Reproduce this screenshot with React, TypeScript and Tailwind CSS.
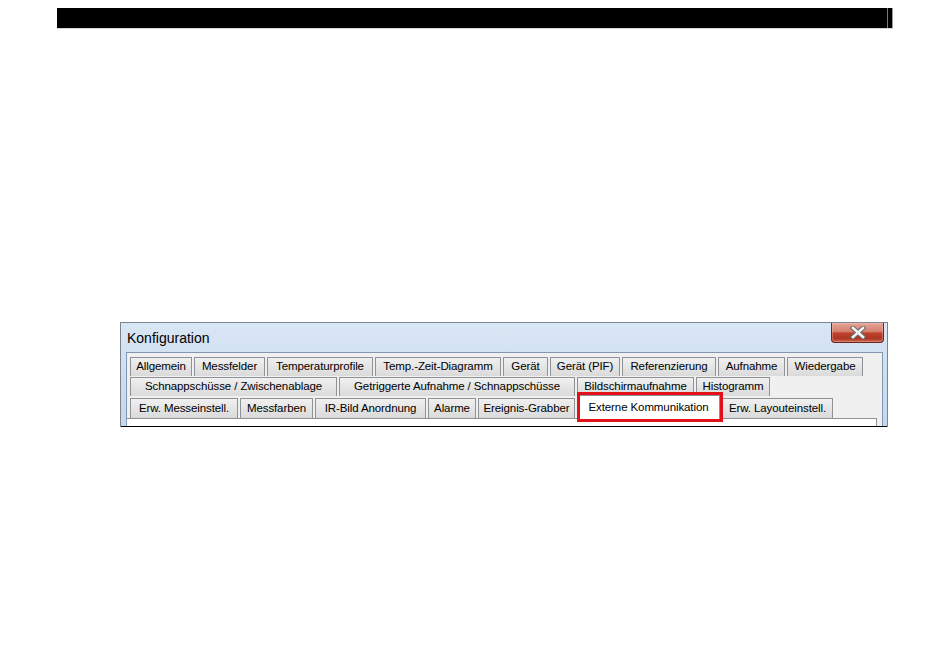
import React from "react";

type T = [string, string];

const row1: T[] = [
  ["Allgemein", "w-[62px]"],
  ["Messfelder", "w-[71px]"],
  ["Temperaturprofile", "w-[106px]"],
  ["Temp.-Zeit-Diagramm", "w-[126px]"],
  ["Gerät", "w-[45px]"],
  ["Gerät (PIF)", "w-[70px]"],
  ["Referenzierung", "w-[94px]"],
  ["Aufnahme", "w-[67px]"],
  ["Wiedergabe", "w-[76px]"],
];

const row2: T[] = [
  ["Schnappschüsse / Zwischenablage", "w-[207px]"],
  ["Getriggerte Aufnahme / Schnappschüsse", "w-[236px]"],
  ["Bildschirmaufnahme", "w-[117px]"],
  ["Histogramm", "w-[74px]"],
];

const row3a: T[] = [
  ["Erw. Messeinstell.", "w-[108px]"],
  ["Messfarben", "w-[73px]"],
  ["IR-Bild Anordnung", "w-[111px]"],
  ["Alarme", "w-[48px]"],
  ["Ereignis-Grabber", "w-[97px]"],
];

const tabCls =
  "h-full flex items-center justify-center border border-b-0 border-[#8e9196] bg-[linear-gradient(to_bottom,#f0f0f0,#dadada)] text-[11.5px] tracking-[-0.1px] leading-none text-black whitespace-nowrap";

function Tab({ label, w }: { label: string; w: string }) {
  return <div className={`${tabCls} ${w}`}>{label}</div>;
}

function CloseX() {
  return (
    <svg width="18" height="13" viewBox="0 0 18 13">
      <path d="M4 2 L14 11 M14 2 L4 11" stroke="#6a6a6a" strokeWidth="4.6" strokeLinecap="square" />
      <path d="M4 2 L14 11 M14 2 L4 11" stroke="#f4f4f4" strokeWidth="2.6" strokeLinecap="square" />
    </svg>
  );
}

export default function App() {
  return (
    <div className="w-[950px] h-[646px] bg-white overflow-hidden font-['Liberation_Sans',Arial,sans-serif]">
      <div className="ml-[57px] mt-[8px] w-[836px]">
        <div className="flex h-[20px]">
          <div className="w-[830px] bg-black" />
          <div className="w-px bg-[#7a7a7a]" />
          <div className="w-[4px] bg-black" />
          <div className="w-px bg-[#9a9a9a]" />
        </div>
        <div className="h-px bg-[#d6d6d6]" />
      </div>

      <div className="mt-[293px] ml-[120px] w-[768px] flex flex-col border-t border-l border-r border-[#7b8490] bg-[linear-gradient(to_bottom,#d9e6f4,#c3d7ee)]">
        <div className="h-[29px] flex justify-between">
          <span className="pl-[6px] pt-[7px] text-[14px] leading-[16px] text-black">Konfiguration</span>
          <div className="mr-[3px] w-[53px] h-[20px] flex items-center justify-center rounded-b-[4px] border border-t-0 border-[#6e2418] bg-[linear-gradient(to_bottom,#e4a496_0%,#d4806f_45%,#be4430_52%,#ad3422_80%,#c86650_100%)] shadow-[inset_0_0_0_1px_rgba(255,200,190,0.35)]">
            <CloseX />
          </div>
        </div>

        <div className="h-[74px] pl-[5px] pr-[4px]">
          <div className="h-full border-l border-t border-r border-[#8497b0] bg-[#f0f0f0] pt-[4px] flex flex-col">
            <div className="flex gap-[2px] ml-[3px] h-[19px]">
              {row1.map(([l, w]) => (
                <Tab key={l} label={l} w={w} />
              ))}
            </div>
            <div className="flex gap-[2px] ml-[3px] h-[19px] mt-[1px]">
              {row2.map(([l, w]) => (
                <Tab key={l} label={l} w={w} />
              ))}
            </div>
            <div className="flex gap-[2px] ml-[3px] h-[20px] mt-[2px]">
              {row3a.map(([l, w]) => (
                <Tab key={l} label={l} w={w} />
              ))}
              <div className="relative w-[143px] h-full">
                <div className="absolute left-0 right-0 top-[-3px] bottom-[-1px] z-10 bg-white border border-b-0 border-[#8e9196] flex items-center justify-center text-[11.5px] tracking-[-0.1px] leading-none text-black whitespace-nowrap">
                  Externe Kommunikation
                </div>
                <div className="absolute left-0 right-[-3px] top-[-6px] bottom-[-4px] z-20 border-[3px] border-[#e3101a]" />
              </div>
              <Tab label="Erw. Layouteinstell." w="w-[111px]" />
            </div>
            <div className="w-[750px] h-[8px] border-t border-r border-[#8e9196] bg-white" />
          </div>
        </div>
        <div className="h-px bg-black" />
      </div>
    </div>
  );
}
